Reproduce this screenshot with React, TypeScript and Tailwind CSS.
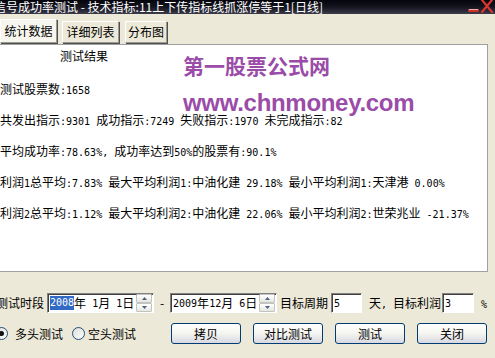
import React from "react";

// ASCII runs get a 6px-wide mono face so numbers line up like the old bitmap font
function Mixed({ text }: { text: string }) {
  const parts = text.split(/([\u0000-\u00ff]+)/).filter((p) => p !== "");
  return (
    <>
      {parts.map((p, i) =>
        /^[\u0000-\u00ff]+$/.test(p) ? (
          <span key={i} className="font-['DejaVu_Sans_Mono',monospace] text-[10px]">
            {p}
          </span>
        ) : (
          <span key={i}>{p}</span>
        )
      )}
    </>
  );
}

function Spinner() {
  return (
    <div className="flex flex-col w-[16px] h-[18px] ml-auto">
      <div className="flex-1 flex items-center justify-center border border-[#c3c3c3] bg-gradient-to-b from-white to-[#e6e6e0] rounded-[1px]">
        <svg width="5" height="3" viewBox="0 0 5 3">
          <path d="M2.5 0 L5 3 L0 3 Z" fill="#4d6185" />
        </svg>
      </div>
      <div className="flex-1 flex items-center justify-center border border-[#c3c3c3] bg-gradient-to-b from-white to-[#e6e6e0] rounded-[1px]">
        <svg width="5" height="3" viewBox="0 0 5 3">
          <path d="M0 0 L5 0 L2.5 3 Z" fill="#4d6185" />
        </svg>
      </div>
    </div>
  );
}

function XpButton({ label }: { label: string }) {
  return (
    <button className="w-[70px] h-[21px] ml-[12px] first:ml-0 rounded-[3px] border border-[#003c74] bg-gradient-to-b from-white via-[#f4f4f0] to-[#d8d9e2] text-[12px] leading-[19px] text-black">
      {label}
    </button>
  );
}

const lines = [
  "测试股票数:1658",
  "共发出指示:9301 成功指示:7249 失败指示:1970 未完成指示:82",
  "平均成功率:78.63%, 成功率达到50%的股票有:90.1%",
  "利润1总平均:7.83% 最大平均利润1:中油化建 29.18% 最小平均利润1:天津港 0.00%",
  "利润2总平均:1.12% 最大平均利润2:中油化建 22.06% 最小平均利润2:世荣兆业 -21.37%",
];

export default function App() {
  return (
    <div className="w-[495px] h-[358px] overflow-hidden bg-[#ece9d8] flex flex-col font-['Noto_Sans_CJK_SC',sans-serif] text-[12px] text-black">
      {/* title bar */}
      <div className="h-[14px] shrink-0 flex items-center bg-gradient-to-b from-[#05050c] via-[#15151f] to-[#3c3c4a] overflow-hidden">
        <span className="-ml-[6px] text-white text-[12px] leading-[14px] whitespace-pre">
          信号成功率测试 - 技术指标:11上下传指标线抓涨停等于1[日线]
        </span>
        <div className="ml-auto flex items-center h-[14px] pr-[1px]">
          <svg width="13" height="14" viewBox="0 0 13 14">
            <rect x="1" y="9" width="11" height="3" rx="1" fill="#c8302a" />
            <rect x="2" y="9" width="9" height="1" fill="#f3b0a8" />
          </svg>
          <svg width="14" height="14" viewBox="0 0 14 14">
            <path d="M2 0 L12 12 M12 0 L2 12" stroke="#d8362e" strokeWidth="2.2" strokeLinecap="round" />
          </svg>
        </div>
      </div>

      {/* tabs */}
      <div className="h-[30px] shrink-0 flex items-end pb-[1px]">
        <div className="w-[57px] h-[24px] flex items-center justify-center bg-[#f6f5ee] border border-t-white border-l-white border-r-[#9a9a90] border-b-[#9a9a90] shadow-[1px_1px_0_#505050]">
          统计数据
        </div>
        <div className="w-[57px] h-[22px] ml-[5px] flex items-center justify-center bg-[#ece9d8] border border-t-white border-l-white border-r-[#9a9a90] border-b-[#9a9a90] shadow-[1px_1px_0_#505050]">
          详细列表
        </div>
        <div className="w-[42px] h-[22px] ml-[6px] flex items-center justify-center bg-[#ece9d8] border border-t-white border-l-white border-r-[#9a9a90] border-b-[#9a9a90] shadow-[1px_1px_0_#505050]">
          分布图
        </div>
      </div>

      {/* result panel */}
      <div className="relative h-[228px] w-[488px] shrink-0 bg-white border-t border-r border-b border-[#a0a0a0]">
        <div className="h-[21px] leading-[21px] pl-[60px]">测试结果</div>
        <div className="mt-[7px] flex flex-col">
          {lines.map((l) => (
            <div key={l} className="h-[31px] leading-[31px] whitespace-pre">
              <Mixed text={l} />
            </div>
          ))}
        </div>
        {/* watermark */}
        <div className="absolute left-[183px] top-[4px] flex flex-col text-[#9a4ca8] font-bold">
          <span className="text-[21px] leading-[32px] font-['Noto_Sans_CJK_SC',sans-serif]">第一股票公式网</span>
          <span className="mt-[7px] text-[24px] leading-[30px] tracking-[-0.3px] font-['Liberation_Sans',Arial,sans-serif]">www.chnmoney.com</span>
        </div>
      </div>

      {/* period row */}
      <div className="mt-[21px] h-[20px] flex items-center whitespace-nowrap">
        <span className="-ml-[4px]">测试时段</span>
        <div className="ml-[3px] w-[107px] h-[20px] flex items-center bg-white border border-[#808080] border-b-white border-r-white shadow-[inset_1px_1px_0_#404040] pl-[2px] pr-[1px] whitespace-pre">
          <span className="bg-[#316ac5] text-white font-['DejaVu_Sans_Mono',monospace] text-[10px] leading-[14px]">2008</span>
          <Mixed text="年 1月 1日" />
          <Spinner />
        </div>
        <span className="w-[16px] text-center">-</span>
        <div className="w-[107px] h-[20px] flex items-center bg-white border border-[#808080] border-b-white border-r-white shadow-[inset_1px_1px_0_#404040] pl-[2px] pr-[1px] whitespace-pre">
          <Mixed text="2009年12月 6日" />
          <Spinner />
        </div>
        <span className="ml-[3px]">目标周期</span>
        <div className="ml-[3px] w-[31px] h-[20px] flex items-center bg-white border border-[#808080] border-b-white border-r-white shadow-[inset_1px_1px_0_#404040] pl-[2px]">
          <Mixed text="5" />
        </div>
        <span className="ml-[7px] whitespace-pre">
          <Mixed text="天, 目标利润" />
        </span>
        <div className="ml-[1px] w-[32px] h-[20px] flex items-center bg-white border border-[#808080] border-b-white border-r-white shadow-[inset_1px_1px_0_#404040] pl-[2px]">
          <Mixed text="3" />
        </div>
        <span className="ml-[7px]">
          <Mixed text="%" />
        </span>
      </div>

      {/* options + buttons */}
      <div className="mt-[10px] h-[21px] flex items-center whitespace-nowrap">
        <div className="-ml-[5px] w-[13px] h-[13px] rounded-full border border-[#1c5180] bg-gradient-to-br from-[#dcdcd6] to-white flex items-center justify-center">
          <div className="w-[5px] h-[5px] rounded-full bg-[#111]" />
        </div>
        <span className="ml-[7px]">多头测试</span>
        <div className="ml-[9px] w-[13px] h-[13px] rounded-full border border-[#1c5180] bg-gradient-to-br from-[#dcdcd6] to-white" />
        <span className="ml-[3px]">空头测试</span>
        <div className="ml-[35px] flex">
          <XpButton label="拷贝" />
          <XpButton label="对比测试" />
          <XpButton label="测试" />
          <XpButton label="关闭" />
        </div>
      </div>
    </div>
  );
}
